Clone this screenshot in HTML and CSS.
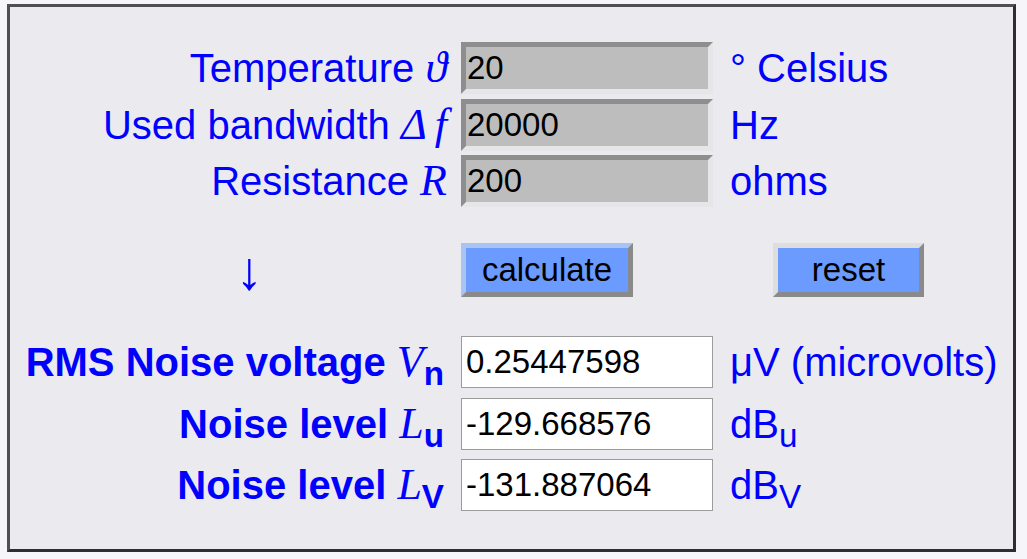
FILE: index.html
```html
<!DOCTYPE html>
<html lang="en">
  <head>
    <meta charset="UTF-8" />
    <meta name="viewport" content="width=device-width, initial-scale=1.0" />
    <title>Thermal noise voltage calculator</title>
    <link rel="stylesheet" href="styles.css">
  </head>
  <body>
    <div class="panel">
      <!-- Inputs -->
      <div class="rows inputs">
        <label class="name" for="temp">Temperature <i class="sym">ϑ</i></label>
        <input id="temp" class="field" type="text" value="20" />
        <span class="unit">° Celsius</span>

        <label class="name" for="bw">Used bandwidth <i class="sym delta">Δ</i><i class="sym">f</i></label>
        <input id="bw" class="field" type="text" value="20000" />
        <span class="unit">Hz</span>

        <label class="name" for="res">Resistance <i class="sym">R</i></label>
        <input id="res" class="field" type="text" value="200" />
        <span class="unit">ohms</span>
      </div>

      <!-- Buttons -->
      <div class="rows actions">
        <span class="arrow">↓</span>
        <button class="btn calc" type="button">calculate</button>
        <button class="btn reset" type="button">reset</button>
      </div>

      <!-- Results -->
      <div class="rows results">
        <label class="name strong" for="vn">RMS Noise voltage <i class="sym">V</i><sub>n</sub></label>
        <input id="vn" class="out" type="text" value="0.25447598" readonly />
        <span class="unit">μV (microvolts)</span>

        <label class="name strong" for="lu">Noise level <i class="sym">L</i><sub>u</sub></label>
        <input id="lu" class="out" type="text" value="-129.668576" readonly />
        <span class="unit">dB<sub>u</sub></span>

        <label class="name strong" for="lv">Noise level <i class="sym">L</i><sub>V</sub></label>
        <input id="lv" class="out" type="text" value="-131.887064" readonly />
        <span class="unit">dB<sub>V</sub></span>
      </div>
    </div>
  </body>
</html>
```
FILE: styles.css
```css
/* Page and frame */
body {
  margin: 0;
  background-color: #f6f6fa;
  font-family: "Liberation Sans", Arial, sans-serif;
}

.panel {
  box-sizing: border-box;
  width: 1009px;
  height: 548px;
  margin: 4px 0 0 7px;
  padding-top: 35px;
  border: 3px solid;
  border-color: #505050 #2e2e2e #2e2e2e #505050;
  background-color: #ebebef;
}

/* Three column table: label, box, unit */
.rows {
  display: grid;
  grid-template-columns: 437px 266px 1fr;
  align-items: center;
}

.inputs {
  grid-auto-rows: 52px;
  row-gap: 4.6px;
}

.actions {
  grid-template-rows: 54px;
  margin-top: 36px;
}

.results {
  grid-auto-rows: 52px;
  row-gap: 9.5px;
  margin-top: 39px;
}

/* Labels and units */
.name,
.unit {
  color: #0000ff;
  font-size: 40px;
  line-height: 52px;
  white-space: nowrap;
}

.name {
  text-align: right;
}

.strong {
  font-weight: bold;
  padding-right: 3px;
}

.unit {
  padding-left: 17px;
}

.sym {
  font-family: "Liberation Serif", "DejaVu Serif", serif;
  font-style: italic;
  font-weight: normal;
  font-size: 44px;
}

.delta {
  margin-right: 8px;
}

sub {
  font-size: 0.83em;
  line-height: 0;
}

/* Entry boxes */
.field,
.out {
  box-sizing: border-box;
  width: 252px;
  height: 52px;
  margin-left: 14px;
  font-family: "Liberation Sans", Arial, sans-serif;
  font-size: 33px;
  color: #000;
}

.field {
  padding: 0 0 0 1px;
  border: 5px solid;
  border-color: #8e8e8e #e6e6e8 #e6e6e8 #8e8e8e;
  background-color: #bdbdbd;
}

.out {
  padding: 0 0 0 4px;
  border: 1px solid #9c9c9c;
  background-color: #fff;
}

/* Buttons */
.arrow {
  color: #0000ff;
  font-size: 54px;
  line-height: 54px;
  padding-left: 226px;
}

.btn {
  box-sizing: border-box;
  height: 54px;
  padding: 0;
  border: 5px solid;
  background-color: #6b9bff;
  color: #000;
  font-family: "Liberation Sans", Arial, sans-serif;
  font-size: 33px;
  cursor: pointer;
}

.calc {
  width: 172px;
  margin-left: 14px;
  border-color: #a9c3f2 #8a8a8a #8a8a8a #a9c3f2;
}

.reset {
  width: 151px;
  margin-left: 60px;
  border-color: #dedede #8a8a8a #8a8a8a #dedede;
}
```
